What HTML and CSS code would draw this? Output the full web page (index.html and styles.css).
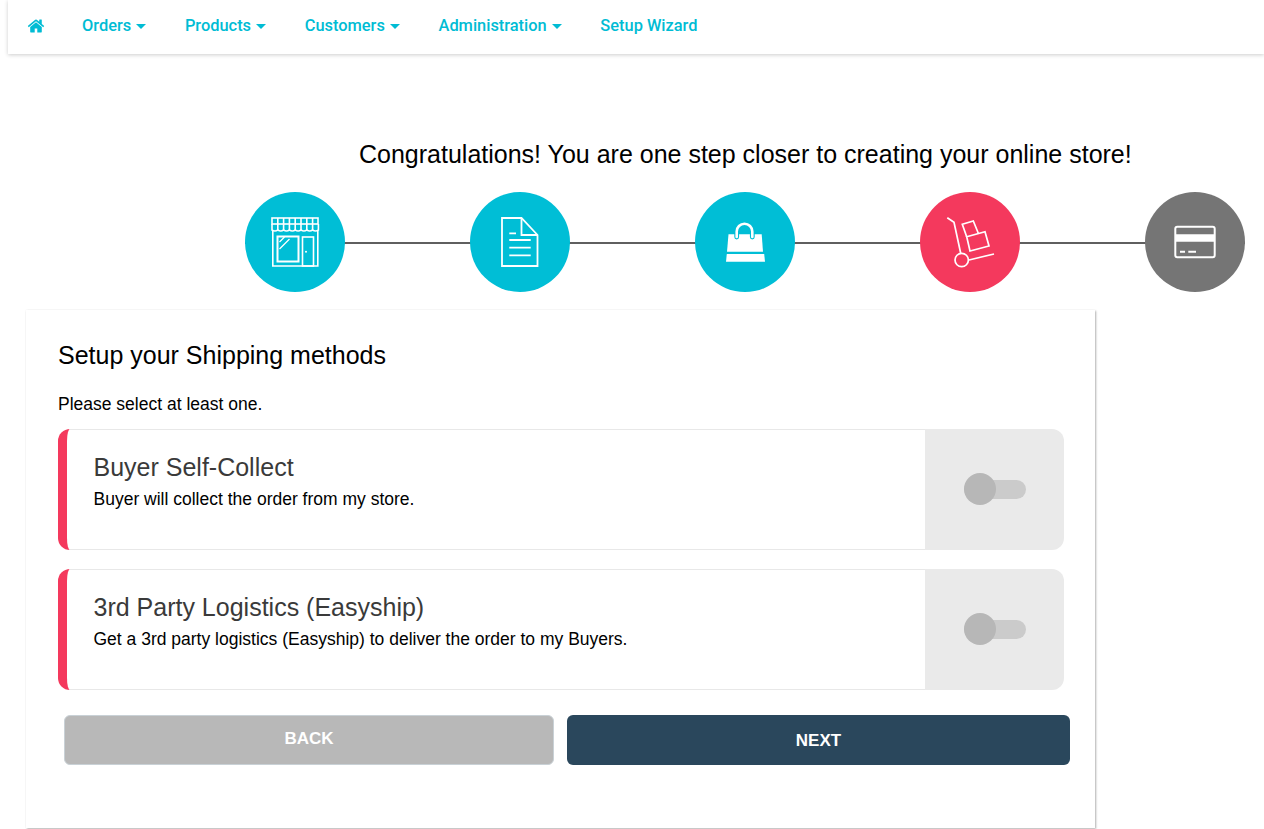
FILE: index.html
```html
<!DOCTYPE html>
<html lang="en">
<head>
    <meta charset="UTF-8">
    <meta name="viewport" content="width=device-width, initial-scale=1.0">
    <title>Setup Wizard</title>
    <link rel="stylesheet" href="styles.css">
</head>
<body>
    <nav class="navbar">
        <a class="nav-home" href="#" aria-label="Home">
            <svg viewBox="0 0 1792 1792" width="18" height="18"><path fill="currentColor" d="M1472 992v480q0 26-19 45t-45 19h-384v-384h-256v384h-384q-26 0-45-19t-19-45v-480q0-1 .5-3t.5-3l575-474 575 474q1 2 1 6zm223-69l-62 74q-8 9-21 11h-3q-13 0-21-7l-692-577-692 577q-12 8-24 7-13-2-21-11l-62-74q-8-10-7-23.5t11-21.5l719-599q32-26 76-26t76 26l244 204v-195q0-14 9-23t23-9h192q14 0 23 9t9 23v408l219 182q10 8 11 21.5t-7 23.5z"/></svg>
        </a>
        <a class="nav-link" href="#">Orders<span class="caret"></span></a>
        <a class="nav-link" href="#">Products<span class="caret"></span></a>
        <a class="nav-link" href="#">Customers<span class="caret"></span></a>
        <a class="nav-link" href="#">Administration<span class="caret"></span></a>
        <a class="nav-link" href="#">Setup Wizard</a>
    </nav>

    <h1 class="title">Congratulations! You are one step closer to creating your online store!</h1>

    <div class="steps">
        <div class="step done">
            <svg viewBox="0 0 100 100" fill="none" stroke="#fff" stroke-width="1.6">
                <rect x="27" y="26" width="46" height="6"/>
                <path d="M27 32v6q3 2 5.800 0q3 2 5.800 0q3 2 5.800 0q3 2 5.800 0q3 2 5.800 0q3 2 5.800 0q3 2 5.800 0q3 2 5.800 0v-6"/>
                <path d="M32.800 26v12M38.600 26v12M44.400 26v12M50.200 26v12M56 26v12M61.800 26v12M67.600 26v12"/>
                <path d="M27.800 39v35h45v-35M27.800 74h45"/>
                <rect x="32.500" y="44.500" width="21" height="25" stroke-width="2"/>
                <rect x="57.500" y="45" width="11" height="29"/>
                <circle cx="61" cy="59.800" r="1" fill="#fff" stroke="none"/>
                <path d="M34.500 50l5-5M34.500 57l10-10" stroke-width="1.300"/>
            </svg>
        </div>
        <div class="step done">
            <svg viewBox="0 0 100 100" fill="none" stroke="#fff" stroke-width="1.800">
                <path d="M32 26h19.500l16 17v31h-35.500z"/>
                <path d="M51.500 26v17h16"/>
                <path d="M39.300 41.300h6.700M39.300 48h21.400M39.300 55.700h21.400M39.300 63.300h21.400"/>
            </svg>
        </div>
        <div class="step done">
            <svg viewBox="0 0 100 100" fill="none">
                <path fill="#fff" d="M33.500 42.300h33.200l1.300 17.400h-36z"/>
                <path fill="#fff" d="M31.800 62h37.400l.8 7.700h-39z"/>
                <path d="M41.700 45v-5.500a7.800 7.800 0 0 1 15.600 0v5.500" stroke="#00bed6" stroke-width="4.800" stroke-linecap="round"/>
                <path d="M41.700 45v-5.500a7.800 7.800 0 0 1 15.600 0v5.500" stroke="#fff" stroke-width="2.600" stroke-linecap="round"/>
            </svg>
        </div>
        <div class="step active">
            <svg viewBox="0 0 100 100" fill="none" stroke="#fff" stroke-width="1.700">
                <path d="M27.300 25.700l6.700 4.600 6.700 31"/>
                <circle cx="41.700" cy="68" r="6.700"/>
                <path d="M49 68l25-6"/>
                <path d="M46.700 44.700l-4.400-12.400 11-3.300 5 12.300"/>
                <path d="M46.700 44.700l18.300-5 4 14.300-19 5z"/>
            </svg>
        </div>
        <div class="step todo">
            <svg viewBox="0 0 100 100" fill="none" stroke="#fff" stroke-width="2">
                <rect x="30.300" y="34.700" width="39.400" height="30.600" rx="2"/>
                <path d="M30.300 46h39.400" stroke-width="7.500"/>
                <path d="M35 59.700h5M43.300 59.700h7.700"/>
            </svg>
        </div>
    </div>

    <main class="card">
        <h2 class="card-title">Setup your Shipping methods</h2>
        <p class="card-note">Please select at least one.</p>

        <div class="method">
            <div class="method-body">
                <h3 class="method-name">Buyer Self-Collect</h3>
                <p class="method-desc">Buyer will collect the order from my store.</p>
            </div>
            <div class="method-toggle"><span class="switch"></span></div>
        </div>

        <div class="method">
            <div class="method-body">
                <h3 class="method-name">3rd Party Logistics (Easyship)</h3>
                <p class="method-desc">Get a 3rd party logistics (Easyship) to deliver the order to my Buyers.</p>
            </div>
            <div class="method-toggle"><span class="switch"></span></div>
        </div>

        <div class="actions">
            <button class="btn btn-back">BACK</button>
            <button class="btn btn-next">NEXT</button>
        </div>
    </main>
</body>
</html>
```

FILE: styles.css
```css
html, body {
    height: 829px;
    overflow: hidden;
}

body {
    margin: 0;
    background-color: #fff;
    font-family: "Liberation Sans", Arial, sans-serif;
    color: #000;
}

.navbar {
    display: flex;
    align-items: center;
    height: 54px;
    margin-left: 8px;
    padding-left: 19px;
    background-color: #fff;
    box-shadow: 0 1px 4px rgba(0, 0, 0, 0.2);
}

.navbar a {
    color: #00bcd4;
    text-decoration: none;
}

.nav-home {
    display: flex;
    margin-right: 37px;
    margin-top: -3px;
}

.nav-link {
    margin-right: 38.700px;
    margin-top: -4px;
    font-family: Roboto, sans-serif;
    font-size: 16.400px;
    font-weight: 500;
}

.caret {
    display: inline-block;
    margin-left: 5px;
    vertical-align: middle;
    border-top: 5px solid #00bcd4;
    border-left: 5px solid transparent;
    border-right: 5px solid transparent;
}

.title {
    margin: 84px 0 0 359px;
    font-size: 25px;
    font-weight: 400;
    line-height: 32px;
    white-space: nowrap;
}

.steps {
    display: flex;
    gap: 125px;
    margin: 22px 0 18px 245px;
    width: 1000px;
    background: linear-gradient(#5f5f5f, #5f5f5f) no-repeat 0 50px / 100% 2px;
}

.step {
    flex: none;
    width: 100px;
    height: 100px;
    border-radius: 50%;
}

.step svg {
    display: block;
    width: 100px;
    height: 100px;
}

.done {
    background-color: #00bed6;
}

.active {
    background-color: #f4395d;
}

.todo {
    background-color: #757575;
}

.card {
    box-sizing: border-box;
    width: 1069px;
    height: 518px;
    margin-left: 26px;
    padding: 32px 31px 0 32px;
    background-color: #fff;
    box-shadow: 1px 1px 2px rgba(0, 0, 0, 0.3), 0 0 2px rgba(0, 0, 0, 0.05);
}

.card-title {
    margin: 0;
    font-size: 25px;
    font-weight: 400;
    line-height: 27px;
}

.card-note {
    height: 36px;
    margin: 23px 0 0;
    padding-bottom: 1px;
    font-size: 17.500px;
    line-height: 24px;
}

.method {
    display: flex;
    box-sizing: border-box;
    height: 121px;
    margin-bottom: 19px;
    border-left: 9px solid #f4395d;
    border-radius: 12px;
    overflow: hidden;
}

.method-body {
    flex: 1;
    padding: 22px 0 0 26.500px;
    border-top: 1px solid #e8e8e8;
    border-bottom: 1px solid #e8e8e8;
}

.method-name {
    margin: 0;
    font-size: 25px;
    font-weight: 400;
    line-height: 30px;
    color: #3a3a3a;
}

.method-desc {
    margin: 5px 0 0;
    font-size: 17.500px;
    line-height: 24px;
}

.method-toggle {
    display: flex;
    align-items: center;
    justify-content: center;
    flex: none;
    width: 139px;
    background-color: #eaeaea;
}

.switch {
    position: relative;
    display: block;
    width: 62px;
    height: 19px;
    border-radius: 10px;
    background-color: #cbcbcb;
}

/* knob sits over the track */
.switch::before {
    content: "";
    position: absolute;
    left: 0;
    top: -7px;
    width: 32px;
    height: 32px;
    border-radius: 50%;
    background-color: #b7b7b7;
}

.actions {
    display: flex;
    gap: 13px;
    margin: 25px 0 0 6px;
    width: 1006px;
}

.btn {
    box-sizing: border-box;
    height: 50px;
    border-radius: 6px;
    color: #fff;
    font-family: "Liberation Sans", Arial, sans-serif;
    font-size: 17px;
    font-weight: 700;
}

.btn-back {
    width: 490px;
    padding-bottom: 3px;
    background-color: #b8b8b8;
    border: 1px solid #c9d1d6;
}

.btn-next {
    width: 503px;
    padding-top: 2px;
    background-color: #2a475c;
    border: none;
}
```
